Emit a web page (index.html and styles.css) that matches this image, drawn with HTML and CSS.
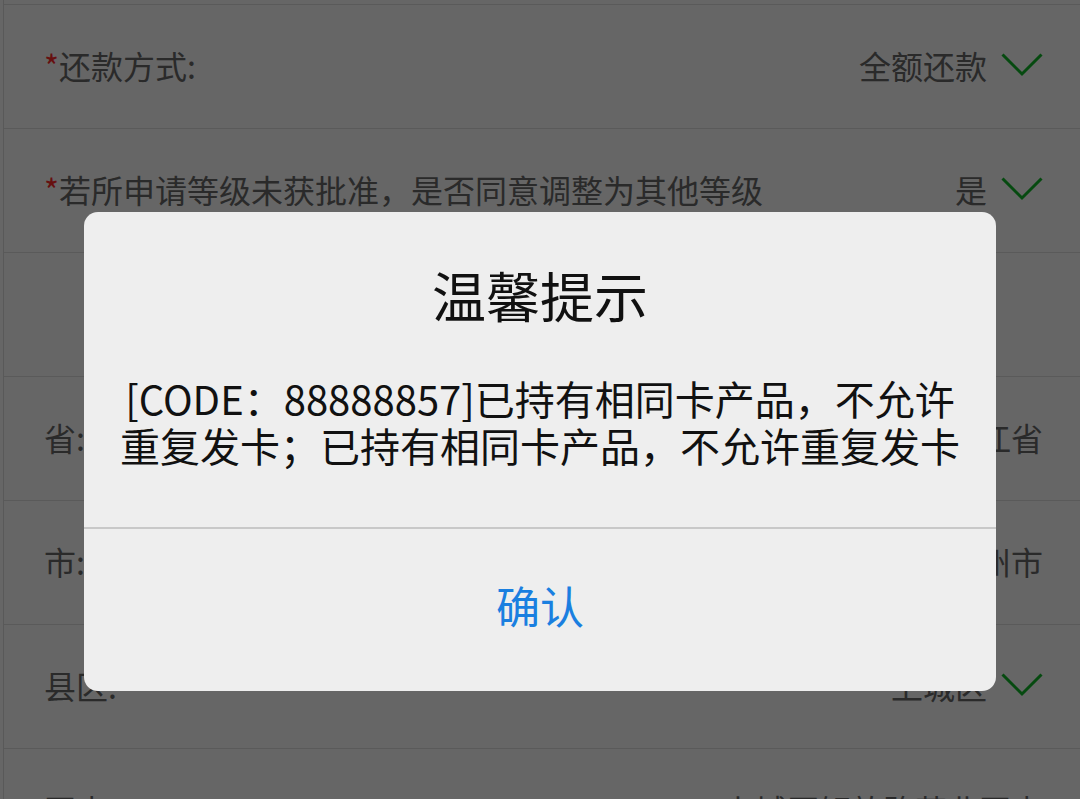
FILE: index.html
```html
<!doctype html>
<html>
<head>
<meta charset="utf-8">
<title>申请信息</title>
<link rel="stylesheet" href="styles.css">
</head>
<body>
	<div class="list">
		<div class="row">
			<div class="label"><span class="req">*</span>还款方式:</div>
			<div class="value">全额还款</div>
			<svg class="arrow" viewBox="0 0 42 24"><path d="M1.5 1.5 L21 21 L40.5 1.5"/></svg>
		</div>
		<div class="row">
			<div class="label"><span class="req">*</span>若所申请等级未获批准，是否同意调整为其他等级</div>
			<div class="value">是</div>
			<svg class="arrow" viewBox="0 0 42 24"><path d="M1.5 1.5 L21 21 L40.5 1.5"/></svg>
		</div>
		<div class="row"></div>
		<div class="row">
			<div class="label">省:</div>
			<div class="value">浙江省</div>
		</div>
		<div class="row">
			<div class="label">市:</div>
			<div class="value">杭州市</div>
		</div>
		<div class="row">
			<div class="label">县区:</div>
			<div class="value">上城区</div>
			<svg class="arrow" viewBox="0 0 42 24"><path d="M1.5 1.5 L21 21 L40.5 1.5"/></svg>
		</div>
		<div class="row">
			<div class="label">网点:</div>
			<div class="value">上城区解放路营业网点</div>
		</div>
	</div>

	<div class="mask">
		<div class="dialog">
			<div class="dtitle">温馨提示</div>
			<div class="dmsg">[CODE：88888857]已持有相同卡产品，不允许<br>重复发卡；已持有相同卡产品，不允许重复发卡</div>
			<div class="dbtn">确认</div>
		</div>
	</div>
</body>
</html>
```
FILE: styles.css
```css
*{margin:0;padding:0;box-sizing:border-box;font-family:"Noto Sans CJK SC","Noto Sans",sans-serif;}
html,body{width:100%;height:100%;overflow:hidden;background:#fff;}
.list{margin-left:3px;padding-top:4px;border-left:1px solid #dedede;min-height:100%;}
.row{display:flex;align-items:center;height:124px;padding:0 37px 4px 40px;border-top:1px solid #e0e0e0;font-size:32px;color:#6a6a6a;}
.label{flex:1;white-space:nowrap;}
.req{color:#ff2a2a;}
.value{white-space:nowrap;}
.arrow{width:42px;height:24px;margin-left:14px;}
.arrow path{fill:none;stroke:#0fba28;stroke-width:3;}
.mask{position:fixed;top:0;left:0;right:0;bottom:0;background:rgba(0,0,0,.6);padding-top:212px;}
.dialog{width:912px;height:479px;margin-left:84px;background:#eeeeee;border-radius:14px;display:flex;flex-direction:column;}
.dtitle{padding-top:53px;font-size:54px;line-height:60px;text-align:center;color:#111;}
.dmsg{margin-top:50px;padding:0 10px 58px;font-size:40px;line-height:47px;text-align:center;color:#111;white-space:nowrap;border-bottom:2px solid #c8c8c8;}
.dbtn{flex:1;display:flex;align-items:center;justify-content:center;padding-bottom:10px;font-size:44px;color:#1a7fe0;}
```
